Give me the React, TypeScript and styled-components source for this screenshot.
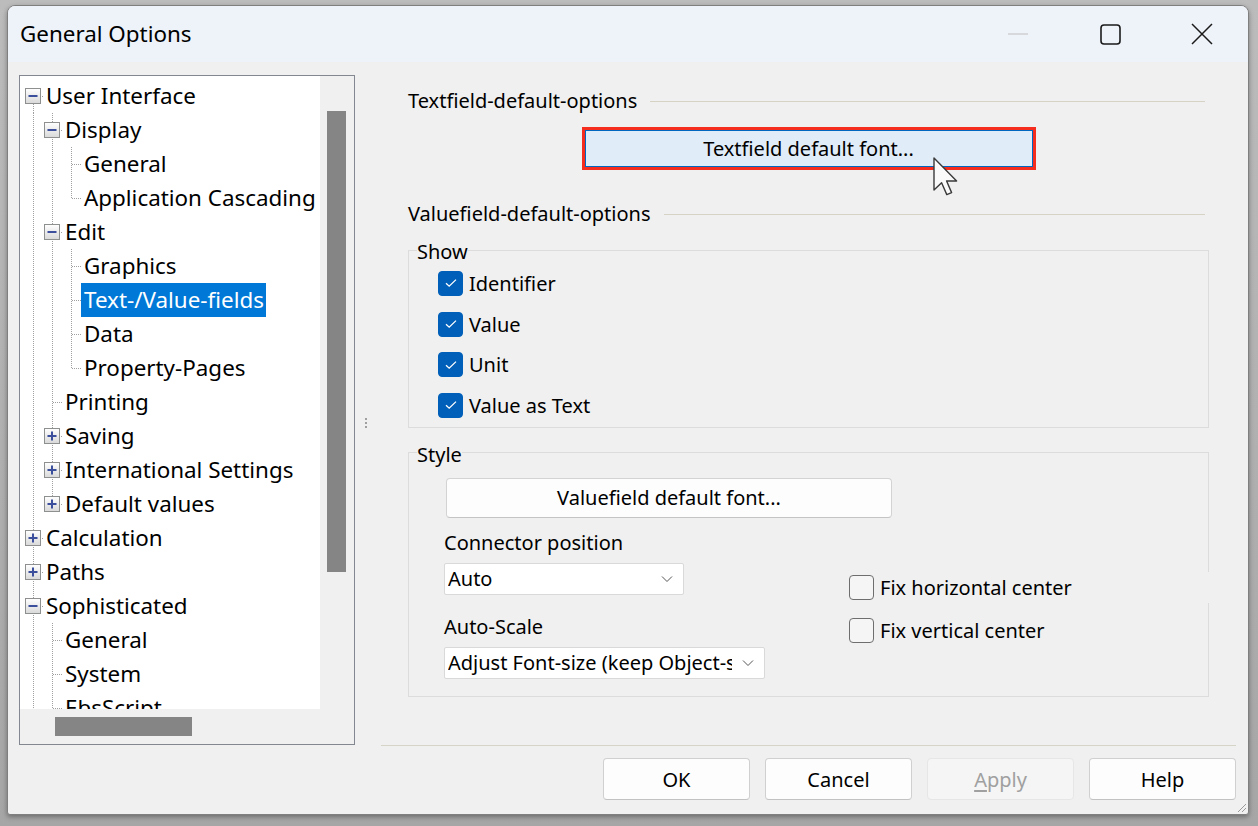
import React, { useId } from 'react';
import styled, { createGlobalStyle } from 'styled-components';

const UI_SIZE = '20px';
const TREE_SIZE = '22.4px';

const GlobalStyle = createGlobalStyle`
  html, body { margin: 0; padding: 0; }
  body {
    background: #b0b0b0;
    font-family: "Noto Sans", "Open Sans", sans-serif;
    color: #000;
  }
  * { box-sizing: border-box; }
`;

const Screen = styled.div`
  width: 1258px;
  height: 826px;
  padding: 5px 0 0 7px;
  background: linear-gradient(#bcbcbc, #a6a6a6);
  overflow: hidden;
`;

const Window = styled.div`
  width: 1242px;
  height: 810px;
  display: flex;
  flex-direction: column;
  background: #f0f0f0;
  border: 1px solid #7f7f7f;
  border-radius: 8px 8px 3px 3px;
  box-shadow: 0 2px 5px rgba(0, 0, 0, 0.35);
  overflow: hidden;
  position: relative;
`;

const TitleBar = styled.div`
  height: 56px;
  flex: none;
  display: flex;
  align-items: center;
  background: #eef2f9;
  padding-left: 12px;
`;

const Title = styled.div`
  flex: 1;
  font-size: ${TREE_SIZE};
  line-height: 28px;
`;

const CaptionButton = styled.div`
  width: 92px;
  height: 56px;
  display: flex;
  align-items: center;
  justify-content: center;
`;

const Main = styled.div`
  display: flex;
  padding: 13px 12px 0 11px;
  flex: none;
`;

/* ---------- Tree ---------- */

const TreePanel = styled.div`
  width: 336px;
  height: 670px;
  flex: none;
  border: 1px solid #828790;
  background: #f0f0f0;
  display: grid;
  grid-template-columns: 1fr 34px;
  grid-template-rows: 1fr 35px;
`;

const TreeViewport = styled.div`
  background: #fff;
  overflow: hidden;
  padding: 3px 0 0 4px;
`;

const VScroll = styled.div`
  padding: 35px 8px 0 7px;
`;

const VThumb = styled.div`
  height: 461px;
  background: #858585;
`;

const HScroll = styled.div`
  grid-column: 1 / span 2;
  padding: 8px 0 0 35px;
`;

const HThumb = styled.div`
  width: 137px;
  height: 19px;
  background: #858585;
`;

const TreeRow = styled.div`
  display: flex;
  align-items: center;
  height: 34px;
  white-space: nowrap;
`;

const CellSvg = styled.svg`
  flex: none;
  display: block;
`;

const TreeLabel = styled.span<{ $selected?: boolean }>`
  font-size: ${TREE_SIZE};
  line-height: 34px;
  height: 34px;
  padding: 0 2px 0 3px;
  background: ${p => (p.$selected ? '#0078d7' : 'transparent')};
  color: ${p => (p.$selected ? '#fff' : '#000')};
`;

type TreeNode = {
  label: string;
  open?: boolean;
  collapsed?: boolean;
  selected?: boolean;
  moreBelow?: boolean;
  children?: TreeNode[];
};

const tree: TreeNode[] = [
  {
    label: 'User Interface',
    open: true,
    children: [
      { label: 'Display', open: true, children: [{ label: 'General' }, { label: 'Application Cascading' }] },
      {
        label: 'Edit',
        open: true,
        children: [
          { label: 'Graphics' },
          { label: 'Text-/Value-fields', selected: true },
          { label: 'Data' },
          { label: 'Property-Pages' },
        ],
      },
      { label: 'Printing' },
      { label: 'Saving', collapsed: true },
      { label: 'International Settings', collapsed: true },
      { label: 'Default values', collapsed: true },
    ],
  },
  { label: 'Calculation', collapsed: true },
  { label: 'Paths', collapsed: true },
  {
    label: 'Sophisticated',
    open: true,
    moreBelow: true,
    children: [{ label: 'General' }, { label: 'System' }, { label: 'EbsScript', moreBelow: true }],
  },
];

type Row = {
  key: string;
  label: string;
  guides: boolean[];
  up: boolean;
  down: boolean;
  box: 'minus' | 'plus' | null;
  selected?: boolean;
};

function flatten(nodes: TreeNode[], guides: boolean[], prefix: string, isRoot: boolean, out: Row[]) {
  nodes.forEach((n, i) => {
    const hasNext = i < nodes.length - 1 || !!n.moreBelow;
    const first = isRoot && i === 0;
    out.push({
      key: `${prefix}${i}`,
      label: n.label,
      guides,
      up: !first,
      down: hasNext,
      box: n.open ? 'minus' : n.collapsed ? 'plus' : null,
      selected: n.selected,
    });
    if (n.open && n.children) flatten(n.children, [...guides, hasNext], `${prefix}${i}-`, false, out);
  });
  return out;
}

const LINE = '#a0a0a0';

function GuideCell({ pipe }: { pipe: boolean }) {
  return (
    <CellSvg width={19} height={34} viewBox="0 0 19 34">
      {pipe && <line x1={9.5} x2={9.5} y1={0} y2={34} stroke={LINE} strokeDasharray="1 1" />}
    </CellSvg>
  );
}

function NodeCell({ up, down, box }: { up: boolean; down: boolean; box: 'minus' | 'plus' | null }) {
  const id = useId().replace(/:/g, '');
  return (
    <CellSvg width={19} height={34} viewBox="0 0 19 34">
      {(up || down) && (
        <line x1={9.5} x2={9.5} y1={up ? 0 : 17} y2={down ? 34 : 17} stroke={LINE} strokeDasharray="1 1" />
      )}
      <line x1={10} x2={19} y1={17.5} y2={17.5} stroke={LINE} strokeDasharray="1 1" />
      {box && (
        <>
          <defs>
            <linearGradient id={`g${id}`} x1="0" y1="0" x2="0" y2="1">
              <stop offset="0" stopColor="#ffffff" />
              <stop offset="1" stopColor="#d9d9d9" />
            </linearGradient>
          </defs>
          <rect x={1.5} y={9.5} width={15} height={15} fill={`url(#g${id})`} stroke="#8e8f8f" />
          <rect x={4.5} y={16} width={9} height={2} fill="#3b4f9c" />
          {box === 'plus' && <rect x={8} y={12.5} width={2} height={9} fill="#3b4f9c" />}
        </>
      )}
    </CellSvg>
  );
}

/* ---------- Splitter ---------- */

const Splitter = styled.div`
  width: 26px;
  flex: none;
  display: flex;
  flex-direction: column;
  justify-content: center;
  align-items: flex-start;
  padding: 24px 0 0 10px;
  gap: 2px;
`;

const Grip = styled.span`
  width: 2px;
  height: 2px;
  background: #a0a0a0;
`;

/* ---------- Right pane ---------- */

const RightPane = styled.div`
  width: 855px;
  height: 671px;
  flex: none;
  padding: 0 27px;
  border-bottom: 1px solid #d6d3c7;
  display: flex;
  flex-direction: column;
  font-size: ${UI_SIZE};
`;

const SectionHeader = styled.div<{ $mt: number }>`
  display: flex;
  align-items: center;
  gap: 13px;
  margin-top: ${p => p.$mt}px;
  margin-right: 4px;
  line-height: 28px;
  white-space: nowrap;
`;

const HeaderLine = styled.span`
  flex: 1;
  height: 1px;
  background: #d6d3c4;
`;

const CenterRow = styled.div`
  display: flex;
  justify-content: center;
  margin-top: 15px;
`;

const HotButtonWrap = styled.div`
  position: relative;
`;

const HotButton = styled.div`
  width: 448px;
  height: 37px;
  display: flex;
  align-items: center;
  justify-content: center;
  background: #e0ecf8;
  border: 1px solid #0067c0;
  outline: 3px solid #f42d1e;
`;

const Cursor = styled.svg`
  position: absolute;
  left: 348px;
  top: 27px;
`;

const GroupBox = styled.fieldset<{ $mt: number; $pb: number }>`
  margin: ${p => p.$mt}px 0 0 0;
  padding: 0 0 ${p => p.$pb}px 8px;
  min-width: 0;
  border: 1px solid #dcdcdc;
`;

const GroupLegend = styled.legend`
  padding: 4px 0 0 0;
  line-height: 24px;
`;

const CheckList = styled.div`
  display: flex;
  flex-direction: column;
  padding-left: 21px;
  margin-top: -1px;
`;

const CheckRow = styled.label<{ $h: number; $cover?: boolean }>`
  display: flex;
  align-items: center;
  gap: 6px;
  flex: none;
  height: ${p => p.$h}px;
  background: #f0f0f0;
  margin-right: ${p => (p.$cover ? '-2px' : '0')};
`;

const Box = styled.span<{ $checked: boolean }>`
  width: 25px;
  height: 25px;
  flex: none;
  border-radius: 4px;
  display: flex;
  align-items: center;
  justify-content: center;
  background: ${p => (p.$checked ? '#005fb8' : '#f5f5f5')};
  border: 1px solid ${p => (p.$checked ? '#005fb8' : '#6e6e6e')};
`;

function Check({ checked, label, h = 40.7, cover }: { checked: boolean; label: string; h?: number; cover?: boolean }) {
  return (
    <CheckRow $h={h} $cover={cover}>
      <Box $checked={checked}>
        {checked && (
          <svg width="14" height="10" viewBox="0 0 14 10">
            <path d="M2 5.2 L5.2 8.2 L12 1.6" fill="none" stroke="#fff" strokeWidth="1.3" />
          </svg>
        )}
      </Box>
      {label}
    </CheckRow>
  );
}

const StyleGrid = styled.div`
  display: grid;
  grid-template-columns: 405px 1fr;
  padding-left: 27px;
`;

const WideButton = styled.div`
  grid-column: 1 / span 2;
  width: 446px;
  height: 40px;
  margin: 11px 0 0 2px;
  display: flex;
  align-items: center;
  justify-content: center;
  background: #fdfdfd;
  border: 1px solid #d3d3d3;
  border-bottom-color: #c4c4c4;
  border-radius: 4px;
`;

const FieldStack = styled.div`
  display: flex;
  flex-direction: column;
  padding-top: 11px;
`;

const FieldLabel = styled.div<{ $mt?: number }>`
  line-height: 28px;
  margin-top: ${p => p.$mt ?? 0}px;
`;

const Select = styled.div<{ $w: number }>`
  width: ${p => p.$w}px;
  height: 32px;
  flex: none;
  margin-top: 6px;
  display: flex;
  align-items: center;
  justify-content: space-between;
  padding: 0 10px 0 3px;
  background: #fff;
  border: 1px solid #d9d9d9;
  border-radius: 2px;
  white-space: nowrap;
  overflow: hidden;
`;

const SelectText = styled.span`
  overflow: hidden;
`;

const Chevron = () => (
  <svg width="12" height="8" viewBox="0 0 12 8" style={{ flex: 'none', marginLeft: 10 }}>
    <path d="M1 1.5 L6 6.5 L11 1.5" fill="none" stroke="#555" strokeWidth="1" />
  </svg>
);

const SideStack = styled.div`
  display: flex;
  flex-direction: column;
  padding-top: 54px;
  gap: 12px;
`;

/* ---------- Footer ---------- */

const Footer = styled.div`
  display: flex;
  justify-content: flex-end;
  gap: 15px;
  padding: 12px 12px 0 0;
  font-size: ${UI_SIZE};
`;

const DialogButton = styled.div<{ $disabled?: boolean }>`
  width: 147px;
  height: 42px;
  display: flex;
  align-items: center;
  justify-content: center;
  border-radius: 4px;
  background: ${p => (p.$disabled ? '#f5f5f5' : '#fdfdfd')};
  border: 1px solid ${p => (p.$disabled ? '#e6e6e6' : '#d0d0d0')};
  border-bottom-color: ${p => (p.$disabled ? '#e6e6e6' : '#c2c2c2')};
  color: ${p => (p.$disabled ? '#a0a0a0' : '#000')};
`;

const Mnemonic = styled.span`
  text-decoration: underline;
  text-underline-offset: 3px;
`;

const ResizeGrip = styled.svg`
  position: absolute;
  right: 1px;
  bottom: 1px;
`;

export default function App() {
  const rows = flatten(tree, [], '', true, []);
  return (
    <>
      <GlobalStyle />
      <Screen>
        <Window>
          <TitleBar>
            <Title>General Options</Title>
            <CaptionButton>
              <svg width="20" height="2" viewBox="0 0 20 2">
                <line x1="0" x2="20" y1="1" y2="1" stroke="#bdbdbd" strokeWidth="1.2" />
              </svg>
            </CaptionButton>
            <CaptionButton>
              <svg width="21" height="21" viewBox="0 0 21 21">
                <rect x="1" y="1" width="19" height="19" rx="3" fill="none" stroke="#1a1a1a" strokeWidth="1.6" />
              </svg>
            </CaptionButton>
            <CaptionButton>
              <svg width="22" height="22" viewBox="0 0 22 22">
                <path d="M1 1 L21 21 M21 1 L1 21" stroke="#1a1a1a" strokeWidth="1.5" />
              </svg>
            </CaptionButton>
          </TitleBar>

          <Main>
            <TreePanel>
              <TreeViewport>
                {rows.map(r => (
                  <TreeRow key={r.key}>
                    {r.guides.map((g, i) => (
                      <GuideCell key={i} pipe={g} />
                    ))}
                    <NodeCell up={r.up} down={r.down} box={r.box} />
                    <TreeLabel $selected={r.selected}>{r.label}</TreeLabel>
                  </TreeRow>
                ))}
              </TreeViewport>
              <VScroll>
                <VThumb />
              </VScroll>
              <HScroll>
                <HThumb />
              </HScroll>
            </TreePanel>

            <Splitter>
              <Grip />
              <Grip />
              <Grip />
            </Splitter>

            <RightPane>
              <SectionHeader $mt={12}>
                Textfield-default-options
                <HeaderLine />
              </SectionHeader>
              <CenterRow>
                <HotButtonWrap>
                  <HotButton>Textfield default font...</HotButton>
                  <Cursor width="26" height="40" viewBox="0 0 13 20">
                    <path
                      d="M0.5 0.5 L0.5 16.5 L4.3 12.9 L6.9 18.8 L9.3 17.8 L6.8 12 L11.8 12 Z"
                      fill="#fafafa"
                      stroke="#3a3a3a"
                      strokeWidth="0.7"
                      strokeLinejoin="round"
                    />
                  </Cursor>
                </HotButtonWrap>
              </CenterRow>

              <SectionHeader $mt={33}>
                Valuefield-default-options
                <HeaderLine />
              </SectionHeader>

              <GroupBox $mt={8} $pb={1}>
                <GroupLegend>Show</GroupLegend>
                <CheckList>
                  <Check checked label="Identifier" />
                  <Check checked label="Value" />
                  <Check checked label="Unit" />
                  <Check checked label="Value as Text" />
                </CheckList>
              </GroupBox>

              <GroupBox $mt={11} $pb={17}>
                <GroupLegend>Style</GroupLegend>
                <StyleGrid>
                  <WideButton>Valuefield default font...</WideButton>
                  <FieldStack>
                    <FieldLabel>Connector position</FieldLabel>
                    <Select $w={240}>
                      <SelectText>Auto</SelectText>
                      <Chevron />
                    </Select>
                    <FieldLabel $mt={18}>Auto-Scale</FieldLabel>
                    <Select $w={321}>
                      <SelectText>Adjust Font-size (keep Object-size)</SelectText>
                      <Chevron />
                    </Select>
                  </FieldStack>
                  <SideStack>
                    <Check checked={false} label="Fix horizontal center" h={31} cover />
                    <Check checked={false} label="Fix vertical center" h={31} />
                  </SideStack>
                </StyleGrid>
              </GroupBox>
            </RightPane>
          </Main>

          <Footer>
            <DialogButton>OK</DialogButton>
            <DialogButton>Cancel</DialogButton>
            <DialogButton $disabled>
              <span>
                <Mnemonic>A</Mnemonic>pply
              </span>
            </DialogButton>
            <DialogButton>Help</DialogButton>
          </Footer>
          <ResizeGrip width="12" height="12" viewBox="0 0 12 12">
            <path d="M11 3 L3 11 M11 7 L7 11" stroke="#9a9a9a" strokeWidth="1" />
          </ResizeGrip>
        </Window>
      </Screen>
    </>
  );
}
